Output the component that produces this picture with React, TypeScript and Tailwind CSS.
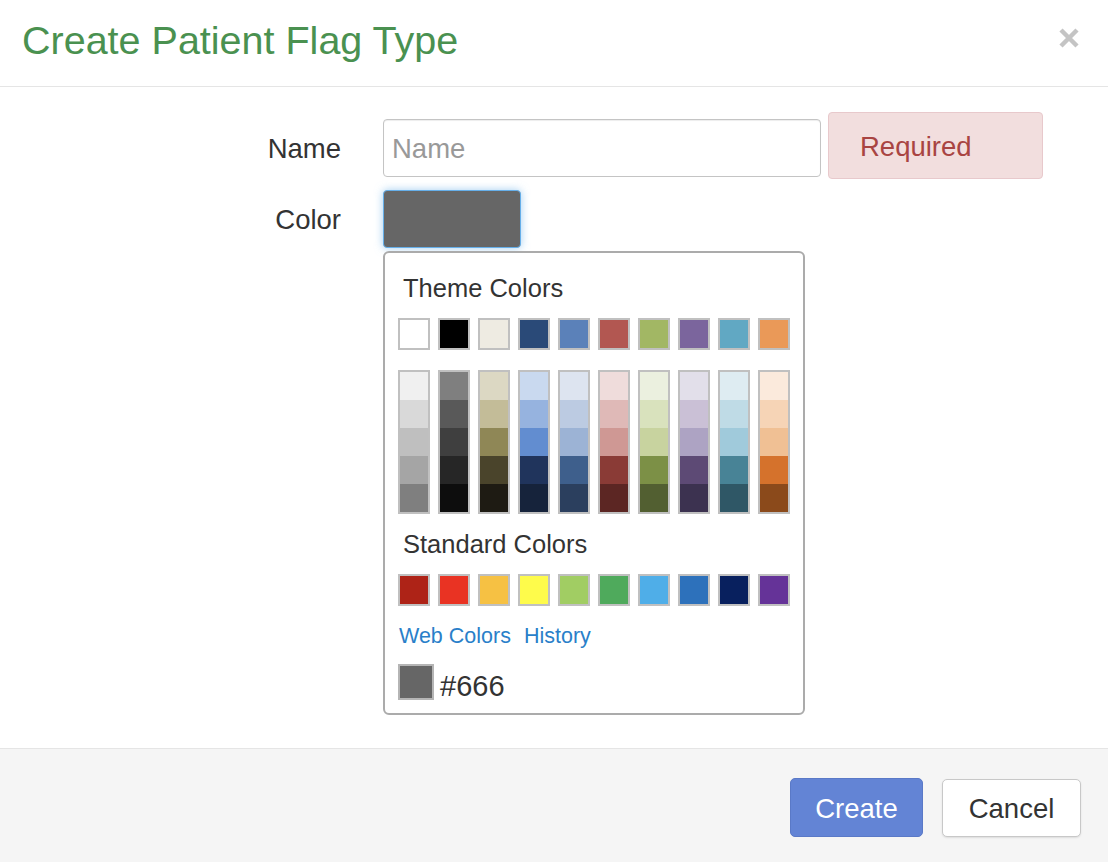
const THEME = [
  "bg-[#ffffff]",
  "bg-[#000000]",
  "bg-[#eeebe2]",
  "bg-[#2a4a78]",
  "bg-[#5b81b9]",
  "bg-[#b25751]",
  "bg-[#a2b764]",
  "bg-[#7b659d]",
  "bg-[#61a8c3]",
  "bg-[#ea9958]",
];

const SHADES = [
  ["bg-[#f0f0f0]", "bg-[#d9d9d9]", "bg-[#bfbfbf]", "bg-[#a5a5a5]", "bg-[#7f7f7f]"],
  ["bg-[#7f7f7f]", "bg-[#595959]", "bg-[#3f3f3f]", "bg-[#262626]", "bg-[#0d0d0d]"],
  ["bg-[#dcd8c3]", "bg-[#c3bc98]", "bg-[#8f8756]", "bg-[#4a442b]", "bg-[#1e1b13]"],
  ["bg-[#c9d9ef]", "bg-[#96b3df]", "bg-[#628dd0]", "bg-[#20345c]", "bg-[#16233b]"],
  ["bg-[#dde4f0]", "bg-[#bccbe2]", "bg-[#9cb3d5]", "bg-[#3e5f8c]", "bg-[#2b3f5e]"],
  ["bg-[#efdcdb]", "bg-[#dfb9b7]", "bg-[#cf9894]", "bg-[#8a3b36]", "bg-[#5c2623]"],
  ["bg-[#ebf0df]", "bg-[#d9e2bd]", "bg-[#c8d39f]", "bg-[#7c9046]", "bg-[#525f31]"],
  ["bg-[#e2dfea]", "bg-[#cac0d6]", "bg-[#ada3c3]", "bg-[#5d4a75]", "bg-[#3c3250]"],
  ["bg-[#deecf2]", "bg-[#bfdbe6]", "bg-[#a0cadb]", "bg-[#488396]", "bg-[#2f5766]"],
  ["bg-[#fbeadc]", "bg-[#f6d4b6]", "bg-[#f0c094]", "bg-[#d5722c]", "bg-[#8b4a1b]"],
];

const STANDARD = [
  "bg-[#ae2317]",
  "bg-[#e93323]",
  "bg-[#f6c143]",
  "bg-[#fefb4b]",
  "bg-[#a1cd63]",
  "bg-[#4faa5c]",
  "bg-[#4faee8]",
  "bg-[#2d71bb]",
  "bg-[#08205e]",
  "bg-[#653398]",
];

function Swatch({ color }: { color: string }) {
  return <span className={`block h-8 w-8 border-2 border-[#c0c0c0] ${color}`} />;
}

function ColorPopover() {
  return (
    <div className="mt-[3px] w-[422px] rounded-[6px] border-2 border-[#ababab] bg-white px-[13px] pt-[20px] pb-[9px]">
      <div className="pl-[5px] text-[25.5px] leading-[30px] text-[#333]">Theme Colors</div>
      <div className="mt-[15px] flex gap-2">
        {THEME.map((c, i) => (
          <Swatch key={i} color={c} />
        ))}
      </div>
      <div className="mt-[20px] flex gap-2">
        {SHADES.map((col, i) => (
          <div key={i} className="flex w-8 flex-col border-2 border-[#c0c0c0]">
            {col.map((c, j) => (
              <span key={j} className={`block h-[28px] ${c}`} />
            ))}
          </div>
        ))}
      </div>
      <div className="mt-[15px] pl-[5px] text-[25.5px] leading-[30px] text-[#333]">Standard Colors</div>
      <div className="mt-[15px] flex gap-2">
        {STANDARD.map((c, i) => (
          <Swatch key={i} color={c} />
        ))}
      </div>
      <div className="mt-[17px] flex gap-[13px] pl-[1px] text-[21.5px] leading-[26px] text-[#2a7fc9]">
        <a href="#">Web Colors</a>
        <a href="#">History</a>
      </div>
      <div className="mt-[15px] flex items-start">
        <span className="block h-9 w-9 border-2 border-[#b5b5b5] bg-[#666]" />
        <span className="mt-[4px] ml-[6px] text-[29px] leading-[36px] text-[#333]">#666</span>
      </div>
    </div>
  );
}

export default function App() {
  return (
    <div className="flex h-[862px] w-full flex-col bg-white font-['Liberation_Sans',Arial,sans-serif] text-[27.5px] text-[#333]">
      <div className="flex h-[87px] items-start justify-between border-b border-[#e5e5e5] pt-[18px] pr-[29px] pl-[22px]">
        <h4 className="text-[39.5px] leading-[44px] text-[#4a9150]">Create Patient Flag Type</h4>
        <button className="mt-[10px]" aria-label="Close">
          <svg width="20" height="20" viewBox="0 0 20 20">
            <path d="M2 2 L18 18 M18 2 L2 18" stroke="#c4c4c4" strokeWidth="4.5" />
          </svg>
        </button>
      </div>

      <div className="flex-1 pt-[25px]">
        <div className="flex items-start">
          <label className="mt-[8px] w-[341px] text-right leading-[58px]">Name</label>
          <input
            placeholder="Name"
            className="mt-[7px] ml-[42px] h-[58px] w-[438px] rounded-[4px] border border-[#c4c4c4] px-[8px] pt-[2px] text-[27.5px] shadow-[inset_0_1px_1px_rgba(0,0,0,0.075)] outline-none placeholder:text-[#999]"
          />
          <div className="ml-[7px] flex h-[67px] w-[215px] items-center rounded-[4px] border border-[#e8c9cc] bg-[#f2dede] pt-[2px] pl-[31px] text-[#a94442]">
            Required
          </div>
        </div>

        <div className="mt-[11px] flex items-start">
          <label className="mt-[1px] w-[341px] text-right leading-[58px]">Color</label>
          <div className="ml-[42px] flex flex-col">
            <button className="h-[58px] w-[138px] rounded-[4px] border border-[#66afe9] bg-[#666] shadow-[0_0_8px_rgba(102,175,233,0.6)]" />
            <ColorPopover />
          </div>
        </div>
      </div>

      <div className="flex h-[114px] items-start justify-end gap-[19px] border-t border-[#e5e5e5] bg-[#f5f5f5] pt-[29px] pr-[27px]">
        <button className="h-[59px] w-[133px] rounded-[5px] border border-[#5a79c7] bg-[#6384d5] pt-[2px] text-[27.5px] text-white">
          Create
        </button>
        <button className="mt-[1px] h-[58px] w-[139px] rounded-[5px] border border-[#c8c8c8] bg-white pt-[2px] text-[27.5px] text-[#333] shadow-[0_1px_2px_rgba(0,0,0,0.1)]">
          Cancel
        </button>
      </div>
    </div>
  );
}
